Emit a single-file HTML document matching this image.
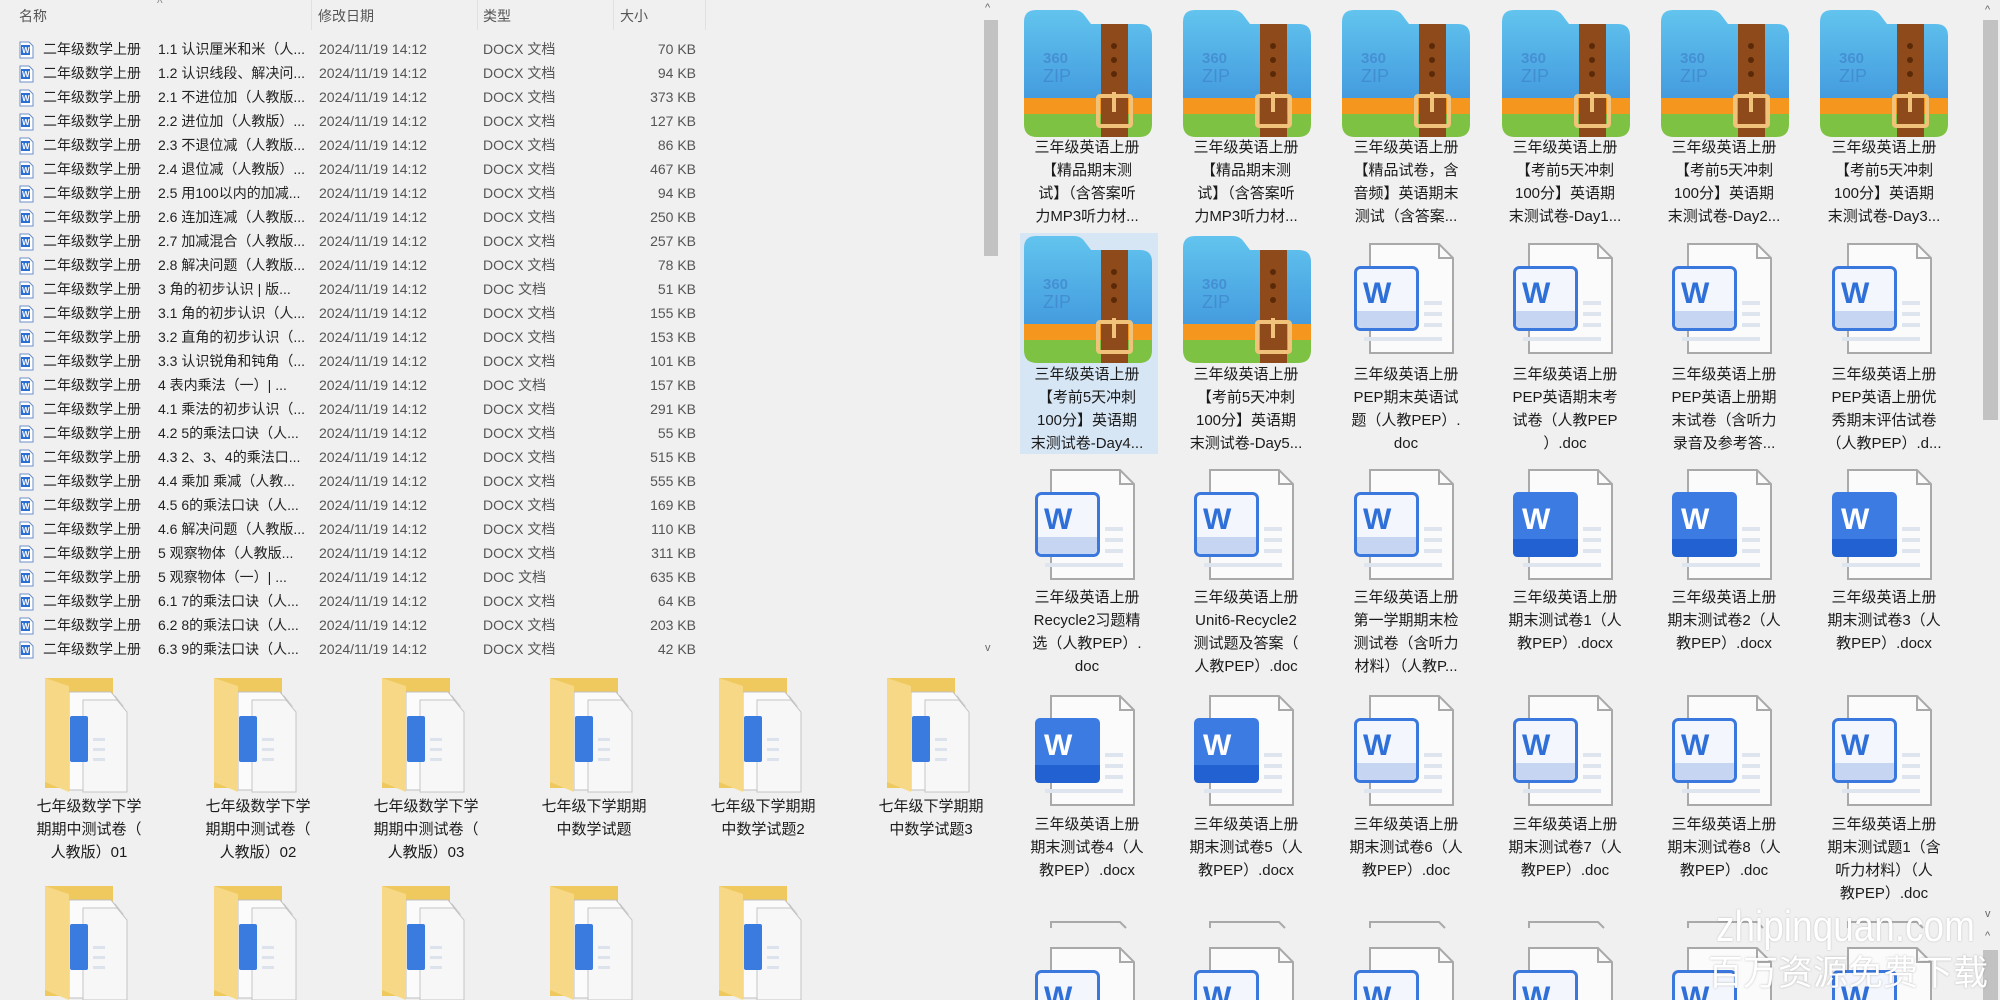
<!DOCTYPE html>
<html><head><meta charset="utf-8"><style>
html,body{margin:0;width:2000px;height:1000px;overflow:hidden}
body{background:#f0f0f0;font-family:"Liberation Sans","Noto Sans CJK SC",sans-serif;position:relative}
.a{position:absolute}
.hd{top:4px;height:24px;line-height:24px;font-size:14px;color:#555}
.sep{top:0;width:1px;height:30px;background:#e0e0e0}
.r{position:absolute;left:0;width:980px;height:24px;line-height:24px;font-size:14px;color:#222;white-space:nowrap}
.r span{position:absolute}
.r .n{left:43px}.r .m{left:158px}.r .d{left:319px;color:#555}.r .t{left:483px;color:#555}.r .s{left:620px;width:76px;text-align:right;color:#555}
.r svg{position:absolute;left:19px;top:4px}
.lab{position:absolute;width:150px;text-align:center;font-size:15px;line-height:23px;color:#1a1a1a}
.flab{position:absolute;width:160px;text-align:center;font-size:15px;line-height:23px;color:#1a1a1a}
</style></head><body>
<svg width="0" height="0" style="position:absolute">
<defs>
<linearGradient id="bg" x1="0" y1="0" x2="0" y2="1"><stop offset="0" stop-color="#62c4ee"/><stop offset="1" stop-color="#4096dc"/></linearGradient>
<g id="zip">
<path d="M0 12 Q0 0 12 0 H50 Q57 0 61 6 L67 14 H116 Q128 14 128 26 V100 H0 Z" fill="url(#bg)"/>
<rect x="0" y="88" width="128" height="18" fill="#f5961f"/>
<path d="M0 104 H128 V114 Q128 127 115 127 H13 Q0 127 0 114 Z" fill="#7dc242"/>
<text x="19" y="53" font-family="Liberation Sans,sans-serif" font-size="15" font-weight="bold" fill="#3f84cc" opacity=".7">360</text>
<text x="19" y="72" font-family="Liberation Sans,sans-serif" font-size="18" fill="#3f84cc" opacity=".7">ZIP</text>
<rect x="77" y="14" width="27" height="113" fill="#8e4a1a"/>
<circle cx="90" cy="36" r="3" fill="#5a2a08"/><circle cx="90" cy="50" r="3" fill="#5a2a08"/><circle cx="90" cy="64" r="3" fill="#5a2a08"/>
<rect x="74" y="86" width="33" height="30" fill="none" stroke="#f1c37a" stroke-width="4" rx="2"/>
<rect x="88" y="82" width="4" height="20" fill="#f1c37a"/>
</g>
<g id="page">
<path d="M16 1 H85 L99 15 V110 H16 Z" fill="#fbfbfb" stroke="#a9a9a9" stroke-width="2"/>
<path d="M85 1 V15 H99" fill="none" stroke="#a9a9a9" stroke-width="2"/>
<rect x="70" y="58" width="18" height="4" fill="#dfe5ee"/><rect x="70" y="69" width="18" height="4" fill="#dfe5ee"/><rect x="70" y="80" width="18" height="4" fill="#dfe5ee"/>
<rect x="10" y="94" width="78" height="4" fill="#dfe5ee"/>
</g>
<g id="docO"><use href="#page"/>
<rect x="1.5" y="24.5" width="62" height="62" rx="5" fill="#f3f6fc" stroke="#3a78de" stroke-width="3"/>
<path d="M3 68 H62 V80 Q62 85 57 85 H8 Q3 85 3 80 Z" fill="#c6d6f2"/>
<text x="9" y="60" font-family="Liberation Sans,sans-serif" font-size="30" font-weight="bold" fill="#2f6fd8">W</text></g>
<g id="docS"><use href="#page"/>
<rect x="0" y="23" width="65" height="65" rx="5" fill="#3b7be2"/>
<path d="M0 70 H65 V83 Q65 88 60 88 H5 Q0 88 0 83 Z" fill="#2261d2"/>
<text x="9" y="60" font-family="Liberation Sans,sans-serif" font-size="30" font-weight="bold" fill="#fff">W</text></g>
<g id="fold">
<path d="M0 0 H68 V110 H0 Z" fill="#efc95e"/>
<path d="M14 18 H70 L78 28 V108 H14 Z" fill="#f4f4f4" stroke="#c8c8c8"/>
<path d="M24 14 H66 L74 24 V112 H24 Z" fill="#fbfbfb" stroke="#c0c0c0"/>
<path d="M38 22 H72 L82 34 V114 H38 Z" fill="#f7f7f7" stroke="#c4c4c4"/>
<rect x="25" y="38" width="18" height="46" rx="2" fill="#3a7be0"/>
<rect x="48" y="60" width="12" height="3" fill="#dde3ec"/><rect x="48" y="70" width="12" height="3" fill="#dde3ec"/><rect x="48" y="80" width="12" height="3" fill="#dde3ec"/>
<path d="M0 0 L24 8 V114 L0 104 Z" fill="#f6d886"/>
</g>
<g id="wi"><path d="M1 1 H10 L14 5 V17 H1 Z" fill="#fff" stroke="#6b8fc9"/><rect x="2" y="4" width="9" height="10" fill="#2b6fd6"/><text x="3" y="12" font-size="8" font-weight="bold" fill="#fff" font-family="Liberation Sans,sans-serif">W</text></g>
</defs></svg>

<div class="a hd" style="left:19px">名称</div>
<div class="a" style="left:157px;top:-4px;font-size:12px;color:#888">^</div>
<div class="a sep" style="left:311px"></div>
<div class="a hd" style="left:318px">修改日期</div>
<div class="a sep" style="left:477px"></div>
<div class="a hd" style="left:483px">类型</div>
<div class="a sep" style="left:613px"></div>
<div class="a hd" style="left:620px">大小</div>
<div class="a sep" style="left:705px"></div>

<div class="r" style="top:37px"><svg width="16" height="18"><use href="#wi"/></svg><span class="n">二年级数学上册</span><span class="m">1.1 认识厘米和米（人...</span><span class="d">2024/11/19 14:12</span><span class="t">DOCX 文档</span><span class="s">70 KB</span></div>
<div class="r" style="top:61px"><svg width="16" height="18"><use href="#wi"/></svg><span class="n">二年级数学上册</span><span class="m">1.2 认识线段、解决问...</span><span class="d">2024/11/19 14:12</span><span class="t">DOCX 文档</span><span class="s">94 KB</span></div>
<div class="r" style="top:85px"><svg width="16" height="18"><use href="#wi"/></svg><span class="n">二年级数学上册</span><span class="m">2.1 不进位加（人教版...</span><span class="d">2024/11/19 14:12</span><span class="t">DOCX 文档</span><span class="s">373 KB</span></div>
<div class="r" style="top:109px"><svg width="16" height="18"><use href="#wi"/></svg><span class="n">二年级数学上册</span><span class="m">2.2 进位加（人教版）...</span><span class="d">2024/11/19 14:12</span><span class="t">DOCX 文档</span><span class="s">127 KB</span></div>
<div class="r" style="top:133px"><svg width="16" height="18"><use href="#wi"/></svg><span class="n">二年级数学上册</span><span class="m">2.3 不退位减（人教版...</span><span class="d">2024/11/19 14:12</span><span class="t">DOCX 文档</span><span class="s">86 KB</span></div>
<div class="r" style="top:157px"><svg width="16" height="18"><use href="#wi"/></svg><span class="n">二年级数学上册</span><span class="m">2.4 退位减（人教版）...</span><span class="d">2024/11/19 14:12</span><span class="t">DOCX 文档</span><span class="s">467 KB</span></div>
<div class="r" style="top:181px"><svg width="16" height="18"><use href="#wi"/></svg><span class="n">二年级数学上册</span><span class="m">2.5 用100以内的加减...</span><span class="d">2024/11/19 14:12</span><span class="t">DOCX 文档</span><span class="s">94 KB</span></div>
<div class="r" style="top:205px"><svg width="16" height="18"><use href="#wi"/></svg><span class="n">二年级数学上册</span><span class="m">2.6 连加连减（人教版...</span><span class="d">2024/11/19 14:12</span><span class="t">DOCX 文档</span><span class="s">250 KB</span></div>
<div class="r" style="top:229px"><svg width="16" height="18"><use href="#wi"/></svg><span class="n">二年级数学上册</span><span class="m">2.7 加减混合（人教版...</span><span class="d">2024/11/19 14:12</span><span class="t">DOCX 文档</span><span class="s">257 KB</span></div>
<div class="r" style="top:253px"><svg width="16" height="18"><use href="#wi"/></svg><span class="n">二年级数学上册</span><span class="m">2.8 解决问题（人教版...</span><span class="d">2024/11/19 14:12</span><span class="t">DOCX 文档</span><span class="s">78 KB</span></div>
<div class="r" style="top:277px"><svg width="16" height="18"><use href="#wi"/></svg><span class="n">二年级数学上册</span><span class="m">3 角的初步认识 | 版...</span><span class="d">2024/11/19 14:12</span><span class="t">DOC 文档</span><span class="s">51 KB</span></div>
<div class="r" style="top:301px"><svg width="16" height="18"><use href="#wi"/></svg><span class="n">二年级数学上册</span><span class="m">3.1 角的初步认识（人...</span><span class="d">2024/11/19 14:12</span><span class="t">DOCX 文档</span><span class="s">155 KB</span></div>
<div class="r" style="top:325px"><svg width="16" height="18"><use href="#wi"/></svg><span class="n">二年级数学上册</span><span class="m">3.2 直角的初步认识（...</span><span class="d">2024/11/19 14:12</span><span class="t">DOCX 文档</span><span class="s">153 KB</span></div>
<div class="r" style="top:349px"><svg width="16" height="18"><use href="#wi"/></svg><span class="n">二年级数学上册</span><span class="m">3.3 认识锐角和钝角（...</span><span class="d">2024/11/19 14:12</span><span class="t">DOCX 文档</span><span class="s">101 KB</span></div>
<div class="r" style="top:373px"><svg width="16" height="18"><use href="#wi"/></svg><span class="n">二年级数学上册</span><span class="m">4 表内乘法（一）| ...</span><span class="d">2024/11/19 14:12</span><span class="t">DOC 文档</span><span class="s">157 KB</span></div>
<div class="r" style="top:397px"><svg width="16" height="18"><use href="#wi"/></svg><span class="n">二年级数学上册</span><span class="m">4.1 乘法的初步认识（...</span><span class="d">2024/11/19 14:12</span><span class="t">DOCX 文档</span><span class="s">291 KB</span></div>
<div class="r" style="top:421px"><svg width="16" height="18"><use href="#wi"/></svg><span class="n">二年级数学上册</span><span class="m">4.2 5的乘法口诀（人...</span><span class="d">2024/11/19 14:12</span><span class="t">DOCX 文档</span><span class="s">55 KB</span></div>
<div class="r" style="top:445px"><svg width="16" height="18"><use href="#wi"/></svg><span class="n">二年级数学上册</span><span class="m">4.3 2、3、4的乘法口...</span><span class="d">2024/11/19 14:12</span><span class="t">DOCX 文档</span><span class="s">515 KB</span></div>
<div class="r" style="top:469px"><svg width="16" height="18"><use href="#wi"/></svg><span class="n">二年级数学上册</span><span class="m">4.4 乘加 乘减（人教...</span><span class="d">2024/11/19 14:12</span><span class="t">DOCX 文档</span><span class="s">555 KB</span></div>
<div class="r" style="top:493px"><svg width="16" height="18"><use href="#wi"/></svg><span class="n">二年级数学上册</span><span class="m">4.5 6的乘法口诀（人...</span><span class="d">2024/11/19 14:12</span><span class="t">DOCX 文档</span><span class="s">169 KB</span></div>
<div class="r" style="top:517px"><svg width="16" height="18"><use href="#wi"/></svg><span class="n">二年级数学上册</span><span class="m">4.6 解决问题（人教版...</span><span class="d">2024/11/19 14:12</span><span class="t">DOCX 文档</span><span class="s">110 KB</span></div>
<div class="r" style="top:541px"><svg width="16" height="18"><use href="#wi"/></svg><span class="n">二年级数学上册</span><span class="m">5 观察物体（人教版...</span><span class="d">2024/11/19 14:12</span><span class="t">DOCX 文档</span><span class="s">311 KB</span></div>
<div class="r" style="top:565px"><svg width="16" height="18"><use href="#wi"/></svg><span class="n">二年级数学上册</span><span class="m">5 观察物体（一）| ...</span><span class="d">2024/11/19 14:12</span><span class="t">DOC 文档</span><span class="s">635 KB</span></div>
<div class="r" style="top:589px"><svg width="16" height="18"><use href="#wi"/></svg><span class="n">二年级数学上册</span><span class="m">6.1 7的乘法口诀（人...</span><span class="d">2024/11/19 14:12</span><span class="t">DOCX 文档</span><span class="s">64 KB</span></div>
<div class="r" style="top:613px"><svg width="16" height="18"><use href="#wi"/></svg><span class="n">二年级数学上册</span><span class="m">6.2 8的乘法口诀（人...</span><span class="d">2024/11/19 14:12</span><span class="t">DOCX 文档</span><span class="s">203 KB</span></div>
<div class="r" style="top:637px"><svg width="16" height="18"><use href="#wi"/></svg><span class="n">二年级数学上册</span><span class="m">6.3 9的乘法口诀（人...</span><span class="d">2024/11/19 14:12</span><span class="t">DOCX 文档</span><span class="s">42 KB</span></div>

<div class="a" style="left:982px;top:0;width:18px;height:660px;background:#f0f0f0"></div>
<div class="a" style="left:985px;top:2px;font-size:11px;color:#666">^</div>
<div class="a" style="left:984px;top:20px;width:14px;height:236px;background:#c2c2c2"></div>
<div class="a" style="left:985px;top:642px;font-size:11px;color:#666">v</div>

<svg class="a" style="left:0;top:0" width="1000" height="1000">
<use href="#fold" x="45" y="678"/><use href="#fold" x="214" y="678"/><use href="#fold" x="382" y="678"/><use href="#fold" x="550" y="678"/><use href="#fold" x="719" y="678"/><use href="#fold" x="887" y="678"/>
<use href="#fold" x="45" y="886"/><use href="#fold" x="214" y="886"/><use href="#fold" x="382" y="886"/><use href="#fold" x="550" y="886"/><use href="#fold" x="719" y="886"/>
</svg>
<div class="flab" style="left:9px;top:795px">七年级数学下学<br>期期中测试卷（<br>人教版）01</div>
<div class="flab" style="left:178px;top:795px">七年级数学下学<br>期期中测试卷（<br>人教版）02</div>
<div class="flab" style="left:346px;top:795px">七年级数学下学<br>期期中测试卷（<br>人教版）03</div>
<div class="flab" style="left:514px;top:795px">七年级下学期期<br>中数学试题</div>
<div class="flab" style="left:683px;top:795px">七年级下学期期<br>中数学试题2</div>
<div class="flab" style="left:851px;top:795px">七年级下学期期<br>中数学试题3</div>

<div class="a" style="left:1020px;top:233px;width:138px;height:221px;background:#d6e6f5"></div>
<svg class="a" style="left:1000px;top:0" width="1000" height="1000">
<use href="#zip" x="24" y="10"/><use href="#zip" x="183" y="10"/><use href="#zip" x="342" y="10"/><use href="#zip" x="502" y="10"/><use href="#zip" x="661" y="10"/><use href="#zip" x="820" y="10"/>
<use href="#zip" x="24" y="236"/><use href="#zip" x="183" y="236"/>
<use href="#docO" x="354" y="243"/><use href="#docO" x="513" y="243"/><use href="#docO" x="672" y="243"/><use href="#docO" x="832" y="243"/>
<use href="#docO" x="35" y="469"/><use href="#docO" x="194" y="469"/><use href="#docO" x="354" y="469"/><use href="#docS" x="513" y="469"/><use href="#docS" x="672" y="469"/><use href="#docS" x="832" y="469"/>
<use href="#docS" x="35" y="695"/><use href="#docS" x="194" y="695"/><use href="#docO" x="354" y="695"/><use href="#docO" x="513" y="695"/><use href="#docO" x="672" y="695"/><use href="#docO" x="832" y="695"/>
<g fill="none" stroke="#a9a9a9" stroke-width="2">
<path d="M51 928 V922 H120 L126 928"/><path d="M210 928 V922 H279 L285 928"/><path d="M370 928 V922 H439 L445 928"/><path d="M529 928 V922 H598 L604 928"/><path d="M688 928 V922 H757 L763 928"/><path d="M848 928 V922 H917 L923 928"/>
</g>
<use href="#docO" x="35" y="947"/><use href="#docO" x="194" y="947"/><use href="#docO" x="354" y="947"/><use href="#docO" x="513" y="947"/><use href="#docO" x="672" y="947"/><use href="#docO" x="832" y="947"/>
</svg>
<div class="lab" style="left:1012px;top:136px">三年级英语上册<br>【精品期末测<br>试】（含答案听<br>力MP3听力材...</div>
<div class="lab" style="left:1171px;top:136px">三年级英语上册<br>【精品期末测<br>试】（含答案听<br>力MP3听力材...</div>
<div class="lab" style="left:1331px;top:136px">三年级英语上册<br>【精品试卷，含<br>音频】英语期末<br>测试（含答案...</div>
<div class="lab" style="left:1490px;top:136px">三年级英语上册<br>【考前5天冲刺<br>100分】英语期<br>末测试卷-Day1...</div>
<div class="lab" style="left:1649px;top:136px">三年级英语上册<br>【考前5天冲刺<br>100分】英语期<br>末测试卷-Day2...</div>
<div class="lab" style="left:1809px;top:136px">三年级英语上册<br>【考前5天冲刺<br>100分】英语期<br>末测试卷-Day3...</div>

<div class="lab" style="left:1012px;top:363px">三年级英语上册<br>【考前5天冲刺<br>100分】英语期<br>末测试卷-Day4...</div>
<div class="lab" style="left:1171px;top:363px">三年级英语上册<br>【考前5天冲刺<br>100分】英语期<br>末测试卷-Day5...</div>
<div class="lab" style="left:1331px;top:363px">三年级英语上册<br>PEP期末英语试<br>题（人教PEP）.<br>doc</div>
<div class="lab" style="left:1490px;top:363px">三年级英语上册<br>PEP英语期末考<br>试卷（人教PEP<br>）.doc</div>
<div class="lab" style="left:1649px;top:363px">三年级英语上册<br>PEP英语上册期<br>末试卷（含听力<br>录音及参考答...</div>
<div class="lab" style="left:1809px;top:363px">三年级英语上册<br>PEP英语上册优<br>秀期末评估试卷<br>（人教PEP）.d...</div>

<div class="lab" style="left:1012px;top:586px">三年级英语上册<br>Recycle2习题精<br>选（人教PEP）.<br>doc</div>
<div class="lab" style="left:1171px;top:586px">三年级英语上册<br>Unit6-Recycle2<br>测试题及答案（<br>人教PEP）.doc</div>
<div class="lab" style="left:1331px;top:586px">三年级英语上册<br>第一学期期末检<br>测试卷（含听力<br>材料）（人教P...</div>
<div class="lab" style="left:1490px;top:586px">三年级英语上册<br>期末测试卷1（人<br>教PEP）.docx</div>
<div class="lab" style="left:1649px;top:586px">三年级英语上册<br>期末测试卷2（人<br>教PEP）.docx</div>
<div class="lab" style="left:1809px;top:586px">三年级英语上册<br>期末测试卷3（人<br>教PEP）.docx</div>

<div class="lab" style="left:1012px;top:813px">三年级英语上册<br>期末测试卷4（人<br>教PEP）.docx</div>
<div class="lab" style="left:1171px;top:813px">三年级英语上册<br>期末测试卷5（人<br>教PEP）.docx</div>
<div class="lab" style="left:1331px;top:813px">三年级英语上册<br>期末测试卷6（人<br>教PEP）.doc</div>
<div class="lab" style="left:1490px;top:813px">三年级英语上册<br>期末测试卷7（人<br>教PEP）.doc</div>
<div class="lab" style="left:1649px;top:813px">三年级英语上册<br>期末测试卷8（人<br>教PEP）.doc</div>
<div class="lab" style="left:1809px;top:813px">三年级英语上册<br>期末测试题1（含<br>听力材料）（人<br>教PEP）.doc</div>

<div class="a" style="left:1981px;top:0;width:19px;height:1000px;background:#f0f0f0"></div>
<div class="a" style="left:1985px;top:4px;font-size:11px;color:#666">^</div>
<div class="a" style="left:1983px;top:20px;width:15px;height:400px;background:#c2c2c2"></div>
<div class="a" style="left:1985px;top:908px;font-size:11px;color:#666">v</div>
<div class="a" style="left:1985px;top:930px;font-size:11px;color:#666">^</div>
<div class="a" style="left:1983px;top:950px;width:15px;height:50px;background:#c2c2c2"></div>

<div class="a" style="left:1716px;top:902px;font-size:44px;line-height:50px;white-space:nowrap;color:#fff;text-shadow:0 0 2px rgba(0,0,0,.25);transform:scaleX(0.84);transform-origin:0 0">zhipinquan.com</div>
<div class="a" style="left:1708px;top:952px;font-size:35px;line-height:44px;white-space:nowrap;color:#fff;text-shadow:0 0 2px rgba(0,0,0,.25)">百万资源免费下载</div>
</body></html>
